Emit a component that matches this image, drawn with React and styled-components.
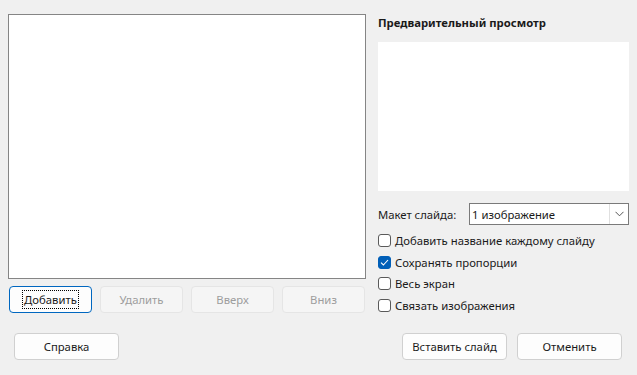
import React from 'react';
import styled, { createGlobalStyle } from 'styled-components';

const Global = createGlobalStyle`
  html, body {
    margin: 0;
    padding: 0;
    background: #f0f0f0;
  }
  body {
    font-family: "Noto Sans", "Open Sans", sans-serif;
    font-size: 11.3px;
    color: #1a1a1a;
  }
`;

const App = () => (
  <>
    <Global />
    <Dialog>
      <Main>
        <LeftColumn>
          <ListBox />
          <ButtonRow>
            <Button focused>
              <FocusText>Добавить</FocusText>
            </Button>
            <Button disabled>Удалить</Button>
            <Button disabled>Вверх</Button>
            <Button disabled>Вниз</Button>
          </ButtonRow>
        </LeftColumn>
        <RightColumn>
          <Title>Предварительный просмотр</Title>
          <Preview />
          <LayoutRow>
            <Label>Макет слайда:</Label>
            <Select>
              <SelectValue>1 изображение</SelectValue>
              <SelectArrow>
                <svg width="9" height="6" viewBox="0 0 9 6">
                  <path d="M0.5 0.8 L4.5 4.8 L8.5 0.8" fill="none" stroke="#555" strokeWidth="1" />
                </svg>
              </SelectArrow>
            </Select>
          </LayoutRow>
          <Checks>
            <Check label="Добавить название каждому слайду" />
            <Check label="Сохранять пропорции" checked />
            <Check label="Весь экран" />
            <Check label="Связать изображения" />
          </Checks>
        </RightColumn>
      </Main>
      <Footer>
        <FooterButton>Справка</FooterButton>
        <FooterRight>
          <FooterButton>Вставить слайд</FooterButton>
          <FooterButton>Отменить</FooterButton>
        </FooterRight>
      </Footer>
    </Dialog>
  </>
);

const Check = ({ label, checked }) => (
  <CheckRow>
    <Box checked={checked}>
      {checked && (
        <svg width="9" height="7" viewBox="0 0 9 7">
          <path d="M1 3.6 L3.4 6 L8 1" fill="none" stroke="#fff" strokeWidth="1.1" />
        </svg>
      )}
    </Box>
    {label}
  </CheckRow>
);

const Dialog = styled.div`
  width: 637px;
  height: 375px;
  box-sizing: border-box;
  padding: 14px 8px 0 8px;
`;

const Main = styled.div`
  display: grid;
  grid-template-columns: 358px 251px;
  column-gap: 12px;
  align-items: start;
  height: 299px;
`;

const LeftColumn = styled.div`
  display: flex;
  flex-direction: column;
`;

const ListBox = styled.div`
  height: 265px;
  box-sizing: border-box;
  background: #fff;
  border: 1px solid #858585;
`;

const ButtonRow = styled.div`
  display: flex;
  gap: 8px;
  margin-top: 7px;
  padding-left: 1px;
`;

const Button = styled.button`
  width: 83px;
  height: 27px;
  box-sizing: border-box;
  border-radius: 4px;
  font-family: inherit;
  font-size: inherit;
  padding: 0;
  display: flex;
  align-items: center;
  justify-content: center;
  background: ${p => (p.disabled ? '#f5f5f5' : '#fdfdfd')};
  color: ${p => (p.disabled ? '#9d9d9d' : '#1a1a1a')};
  border: 1px solid ${p => (p.focused ? '#0067c0' : p.disabled ? '#e5e5e5' : '#d0d0d0')};
`;

const FocusText = styled.span`
  outline: 1px dotted #000;
  padding: 1px 1px;
  line-height: 15px;
`;

const RightColumn = styled.div`
  display: flex;
  flex-direction: column;
`;

const Title = styled.div`
  font-weight: 700;
  height: 17px;
  line-height: 17px;
`;

const Preview = styled.div`
  height: 149px;
  margin-top: 11px;
  background: #fff;
`;

const LayoutRow = styled.div`
  display: flex;
  align-items: center;
  margin-top: 12px;
  height: 22px;
`;

const Label = styled.div`
  width: 91px;
`;

const Select = styled.div`
  flex: 1;
  height: 22px;
  box-sizing: border-box;
  border: 1px solid #7a7a7a;
  background: #fff;
  display: flex;
  align-items: center;
`;

const SelectValue = styled.div`
  flex: 1;
  padding-left: 2px;
`;

const SelectArrow = styled.div`
  width: 18px;
  height: 100%;
  border-left: 1px solid #e0e0e0;
  display: flex;
  align-items: center;
  justify-content: center;
`;

const Checks = styled.div`
  display: flex;
  flex-direction: column;
  margin-top: 5px;
`;

const CheckRow = styled.div`
  display: flex;
  align-items: center;
  gap: 4px;
  height: 21.6px;
`;

const Box = styled.span`
  width: 13px;
  height: 13px;
  box-sizing: border-box;
  border-radius: 3px;
  display: flex;
  align-items: center;
  justify-content: center;
  background: ${p => (p.checked ? '#005fb8' : '#fff')};
  border: 1px solid ${p => (p.checked ? '#005fb8' : '#5a5a5a')};
`;

const Footer = styled.div`
  display: flex;
  justify-content: space-between;
  margin-top: 20px;
  padding: 0 7px 0 6px;
`;

const FooterRight = styled.div`
  display: flex;
  gap: 10px;
`;

const FooterButton = styled.button`
  width: 105px;
  height: 27px;
  box-sizing: border-box;
  border-radius: 4px;
  border: 1px solid #d0d0d0;
  background: #fdfdfd;
  font-family: inherit;
  font-size: inherit;
  color: #1a1a1a;
  padding: 0;
`;

export default App;
